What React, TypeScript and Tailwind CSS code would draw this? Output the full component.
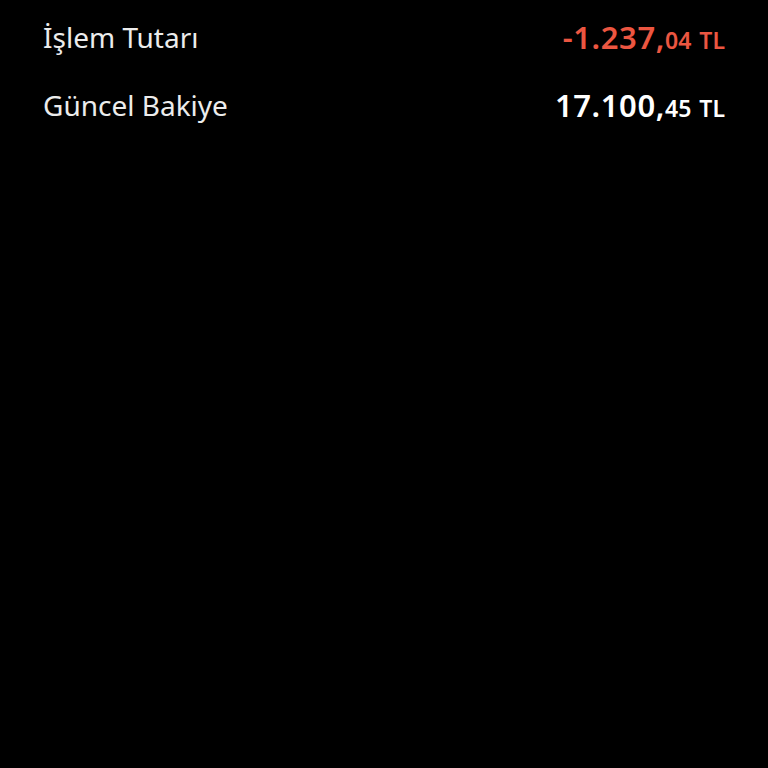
export default function App() {
  const rows = [
    { label: "İşlem Tutarı", main: "-1.237,", cents: "04", color: "text-[#ec5641]" },
    { label: "Güncel Bakiye", main: "17.100,", cents: "45", color: "text-white" },
  ];

  return (
    <div className="min-h-[768px] w-full bg-black px-[43px] pt-[3px] font-['Noto_Sans',sans-serif]">
      {rows.map((r) => (
        <div key={r.label} className="flex h-[68px] items-center justify-between">
          <span className="text-[28px] text-[#ececec]">{r.label}</span>
          <span className={`flex items-baseline font-semibold ${r.color}`}>
            <span className="text-[31px] tracking-[0.6px]">{r.main}</span>
            <span className="text-[23px]">{r.cents}</span>
            <span className="ml-[8px] text-[23px]">TL</span>
          </span>
        </div>
      ))}
    </div>
  );
}
